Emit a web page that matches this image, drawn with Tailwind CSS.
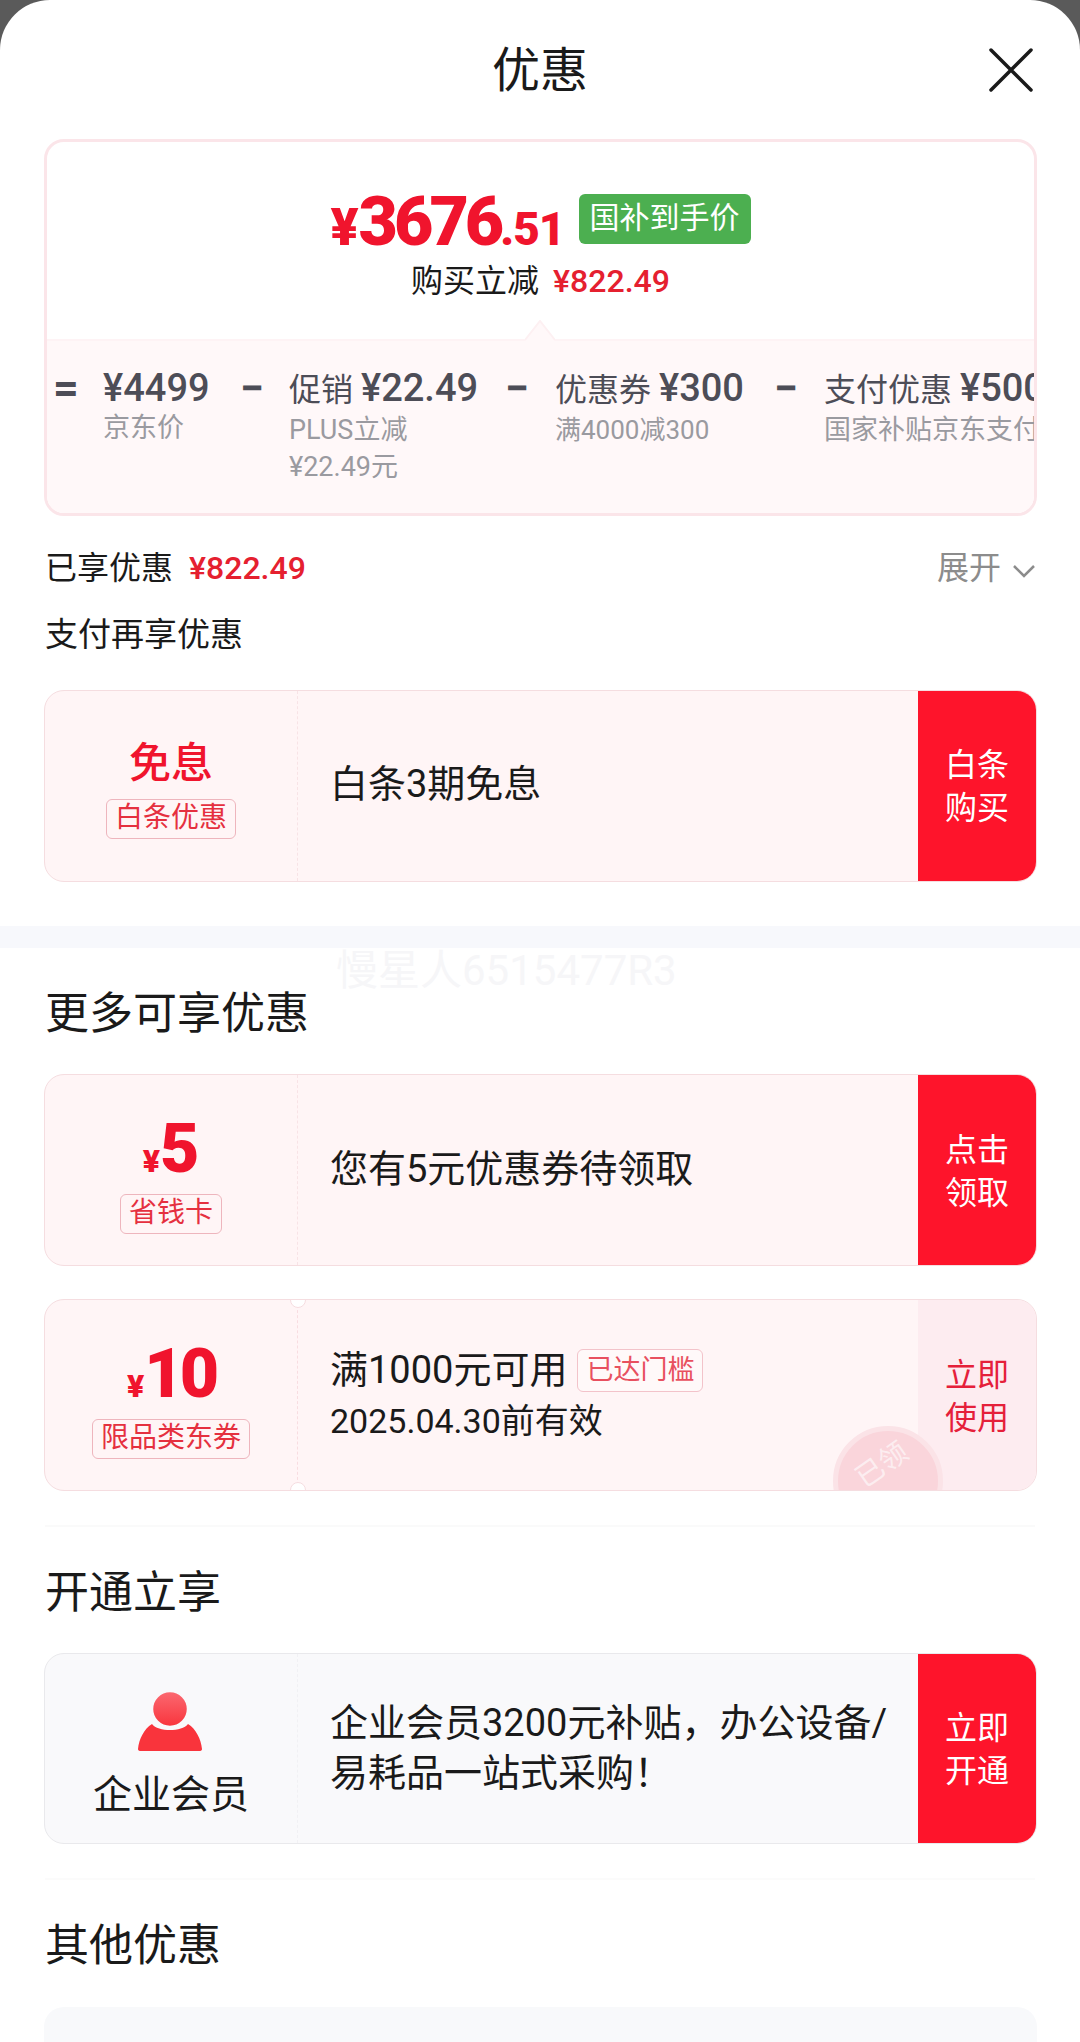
<!DOCTYPE html>
<html lang="zh-CN">
<head>
    <meta charset="UTF-8">
    <meta name="viewport" content="width=device-width, initial-scale=1.0">
    <title>优惠</title>
    <script src="https://cdn.jsdelivr.net/npm/@tailwindcss/browser@4"></script>
</head>
<body class="bg-[#5a5a5a] font-['Roboto','Noto_Sans_CJK_SC',sans-serif] text-[#1a1a1a]">
<div class="relative w-[1080px] h-[2042px] overflow-hidden bg-white rounded-t-[50px]">

    <!-- header -->
    <div class="relative h-[139px] flex justify-center pt-[41px]">
        <h1 class="text-[48px] leading-[60px] font-normal">优惠</h1>
        <svg class="absolute left-[988px] top-[47px] w-[46px] h-[46px]" viewBox="0 0 46 46" fill="none" stroke="#1a1a1a" stroke-width="3.5" stroke-linecap="round">
            <path d="M3 3 L43 43 M43 3 L3 43"/>
        </svg>
    </div>

    <!-- price summary -->
    <div class="relative ml-[44px] w-[993px] h-[377px] border-[3px] border-[#fbe5e9] rounded-[20px] overflow-hidden">
        <div class="h-[197px] flex flex-col items-center pt-[47px]">
            <div class="flex items-center h-[60px]">
                <div class="flex items-baseline mt-[12px] text-[#f0142d] font-black">
                    <span class="text-[52px] leading-[60px]">¥</span>
                    <span class="text-[68px] leading-[60px] tracking-[-4px]">3676</span>
                    <span class="text-[46px] leading-[60px] tracking-[-1px]">.51</span>
                </div>
                <span class="ml-[14px] w-[172px] h-[50px] rounded-[6px] bg-[#4caf50] text-white text-[30px] leading-[48px] text-center">国补到手价</span>
            </div>
            <div class="flex items-center mt-[10px] h-[44px]">
                <span class="text-[32px]">购买立减</span>
                <span class="ml-[14px] text-[32px] font-medium text-[#e5202f]">¥822.49</span>
            </div>
        </div>
        <div class="h-[177px] bg-[#fff8f9] border-t-2 border-[#fef3f5] flex items-start pt-[25px] pl-[6px] whitespace-nowrap text-[#4d4d57]">
            <span class="w-[50px] shrink-0 text-[45px] leading-[44px] font-bold">=</span>
            <div class="w-[137px] shrink-0">
                <div class="text-[38px] leading-[44px] font-medium">¥4499</div>
                <div class="text-[27px] leading-[37px] text-[#9a9aa0]">京东价</div>
            </div>
            <span class="w-[49px] shrink-0 text-[43px] leading-[44px] font-bold">−</span>
            <div class="w-[216px] shrink-0">
                <div class="text-[32px] leading-[44px]">促销 <span class="text-[38px] font-medium">¥22.49</span></div>
                <div class="text-[27px] leading-[37px] text-[#9a9aa0]">PLUS立减<br>¥22.49元</div>
            </div>
            <span class="w-[50px] shrink-0 text-[43px] leading-[44px] font-bold">−</span>
            <div class="w-[219px] shrink-0">
                <div class="text-[32px] leading-[44px]">优惠券 <span class="text-[38px] font-medium">¥300</span></div>
                <div class="text-[26px] leading-[37px] text-[#9a9aa0]">满4000减300</div>
            </div>
            <span class="w-[50px] shrink-0 text-[43px] leading-[44px] font-bold">−</span>
            <div class="shrink-0">
                <div class="text-[32px] leading-[44px]">支付优惠 <span class="text-[38px] font-medium">¥500</span></div>
                <div class="text-[27px] leading-[37px] text-[#9a9aa0]">国家补贴京东支付</div>
            </div>
        </div>
        <svg class="absolute left-[478px] top-[178px] w-[30px] h-[21px]" viewBox="0 0 30 21">
            <path d="M0 21 L15 1 L30 21 Z" fill="#fff8f9"/>
            <path d="M0 20 L15 1 L30 20" fill="none" stroke="#fdf0f2" stroke-width="2"/>
        </svg>
    </div>

    <!-- enjoyed discounts -->
    <div class="flex items-center justify-between mx-[45px] mt-[29px] h-[46px]">
        <div class="flex items-center">
            <span class="text-[32px]">已享优惠</span>
            <span class="ml-[16px] text-[32px] font-medium text-[#e5202f]">¥822.49</span>
        </div>
        <div class="flex items-center text-[32px] text-[#8c8c8c]">
            展开
            <svg class="ml-[12px] mt-[6px] w-[22px] h-[14px]" viewBox="0 0 22 14" fill="none" stroke="#8c8c8c" stroke-width="2.5">
                <path d="M1 2 L11 12 L21 2"/>
            </svg>
        </div>
    </div>
    <p class="mx-[45px] mt-[21px] text-[33px] leading-[46px]">支付再享优惠</p>

    <!-- baitiao coupon -->
    <div class="relative flex ml-[44px] w-[993px] mt-[32px] h-[192px] bg-[#fff5f6] border border-[#f5dde0] rounded-[20px] overflow-hidden">
        <div class="w-[253px] pt-[3px] flex flex-col items-center justify-center border-r border-dashed border-[#f8e3e6]">
            <span class="text-[42px] leading-[56px] font-medium text-[#f0142d]">免息</span>
            <span class="mt-[7px] px-[8px] h-[40px] border border-[#eeb5bd] rounded-[6px] text-[#e5303f] text-[28px] leading-[36px]">白条优惠</span>
        </div>
        <div class="flex-1 flex items-center pl-[32px] pb-[4px] text-[38px]">白条3期免息</div>
        <div class="w-[118px] pt-[2px] bg-[#fe142b] text-white text-[32px] leading-[43px] flex items-center justify-center text-center">白条<br>购买</div>
    </div>

    <!-- section band -->
    <div class="relative mt-[44px] h-[22px] bg-[#f7f8fc]"></div>
    <div class="absolute left-[336px] top-[945px] text-[42px] leading-[52px] text-[#f6f6f8] whitespace-nowrap">慢星人6515477R3</div>

    <h2 class="mx-[45px] mt-[36px] text-[44px] leading-[60px] font-normal">更多可享优惠</h2>

    <!-- saving card coupon -->
    <div class="relative flex ml-[44px] w-[993px] mt-[30px] h-[192px] bg-[#fff5f6] border border-[#f5dde0] rounded-[20px] overflow-hidden">
        <div class="w-[253px] pt-[7px] flex flex-col items-center justify-center border-r border-dashed border-[#f8e3e6]">
            <div class="flex items-baseline h-[70px] font-black text-[#f0142d]">
                <span class="text-[32px] leading-[70px]">¥</span>
                <span class="text-[68px] leading-[70px]">5</span>
            </div>
            <span class="mt-[10px] px-[8px] h-[40px] border border-[#eeb5bd] rounded-[6px] text-[#e5303f] text-[28px] leading-[36px]">省钱卡</span>
        </div>
        <div class="flex-1 flex items-center pl-[32px] pb-[2px] text-[38px]">您有5元优惠券待领取</div>
        <div class="w-[118px] pt-[4px] bg-[#fe142b] text-white text-[32px] leading-[43px] flex items-center justify-center text-center">点击<br>领取</div>
    </div>

    <!-- category coupon -->
    <div class="relative flex ml-[44px] w-[993px] mt-[33px] h-[192px] bg-[#fff5f6] border border-[#f5dde0] rounded-[20px] overflow-hidden">
        <div class="w-[253px] pt-[7px] flex flex-col items-center justify-center border-r border-dashed border-[#f8dde1]">
            <div class="flex items-baseline h-[70px] font-black text-[#f0142d]">
                <span class="text-[32px] leading-[70px]">¥</span>
                <span class="text-[68px] leading-[70px] tracking-[-4px]">10</span>
            </div>
            <span class="mt-[10px] px-[8px] h-[40px] border border-[#eeb5bd] rounded-[6px] text-[#e5303f] text-[28px] leading-[36px]">限品类东券</span>
        </div>
        <div class="flex-1 flex flex-col justify-center pl-[32px] pb-[2px]">
            <div class="flex items-center h-[52px]">
                <span class="text-[38px]">满1000元可用</span>
                <span class="ml-[10px] px-[8px] h-[43px] bg-white/40 border border-[#f3c3ca] rounded-[6px] text-[#e8505f] text-[27px] leading-[40px]">已达门槛</span>
            </div>
            <div class="text-[34px] leading-[46px] mt-[2px]">2025.04.30前有效</div>
        </div>
        <div class="w-[118px] pt-[3px] bg-[#fdecf0] text-[#e5203a] text-[32px] leading-[43px] flex items-center justify-center text-center">立即<br>使用</div>
        <!-- claimed stamp, cut off by the coupon's bottom edge -->
        <div class="absolute left-[788px] top-[126px] w-[110px] h-[110px] rounded-full bg-[#fad5db] border-[5px] border-[#fbe3e7] flex items-start justify-center pt-[16px] pr-[12px]">
            <span class="text-[28px] leading-[36px] text-white/60 -rotate-[35deg]">已领</span>
        </div>
        <!-- ticket notches -->
        <div class="absolute left-[245px] -top-[8px] w-[16px] h-[16px] rounded-full bg-white border border-[#f5dde0]"></div>
        <div class="absolute left-[245px] -bottom-[8px] w-[16px] h-[16px] rounded-full bg-white border border-[#f5dde0]"></div>
    </div>

    <div class="mx-[45px] mt-[34px] h-[2px] bg-[#fafafa]"></div>

    <h2 class="mx-[45px] mt-[36px] text-[44px] leading-[60px] font-normal">开通立享</h2>

    <!-- enterprise member -->
    <div class="relative flex ml-[44px] w-[993px] mt-[30px] h-[191px] bg-[#f9f9fb] border border-[#e9e9ec] rounded-[20px] overflow-hidden">
        <div class="w-[253px] pt-[13px] flex flex-col items-center justify-center border-r border-dashed border-[#f1f1f4]">
            <svg class="w-[64px] h-[60px] mr-[2px]" viewBox="0 0 64 60">
                <defs>
                    <linearGradient id="head" x1="0" y1="0" x2="0" y2="1">
                        <stop offset="0" stop-color="#fb6a72"/>
                        <stop offset="1" stop-color="#f9343c"/>
                    </linearGradient>
                </defs>
                <path d="M14 33 C20 41 44 41 50 33 C58 38 63 48 64 58 Q64 60 61 60 L3 60 Q0 60 0 58 C1 48 6 38 14 33 Z" fill="#f9343c"/>
                <ellipse cx="32" cy="18" rx="18" ry="18" fill="url(#head)" stroke="#f9f9fb" stroke-width="2.5"/>
            </svg>
            <span class="mt-[19px] text-[39px] leading-[50px]">企业会员</span>
        </div>
        <div class="flex-1 flex items-center pl-[32px] pb-[2px] text-[38px] leading-[50px]">企业会员3200元补贴，办公设备/<br>易耗品一站式采购！</div>
        <div class="w-[118px] pt-[2px] bg-[#fe142b] text-white text-[32px] leading-[43px] flex items-center justify-center text-center">立即<br>开通</div>
    </div>

    <div class="mx-[45px] mt-[34px] h-[2px] bg-[#fbfbfb]"></div>

    <h2 class="mx-[45px] mt-[36px] text-[44px] leading-[60px] font-normal">其他优惠</h2>

    <div class="ml-[44px] w-[993px] mt-[31px] h-[192px] bg-[#f8f9fb] rounded-[20px]"></div>
</div>
</body>
</html>
